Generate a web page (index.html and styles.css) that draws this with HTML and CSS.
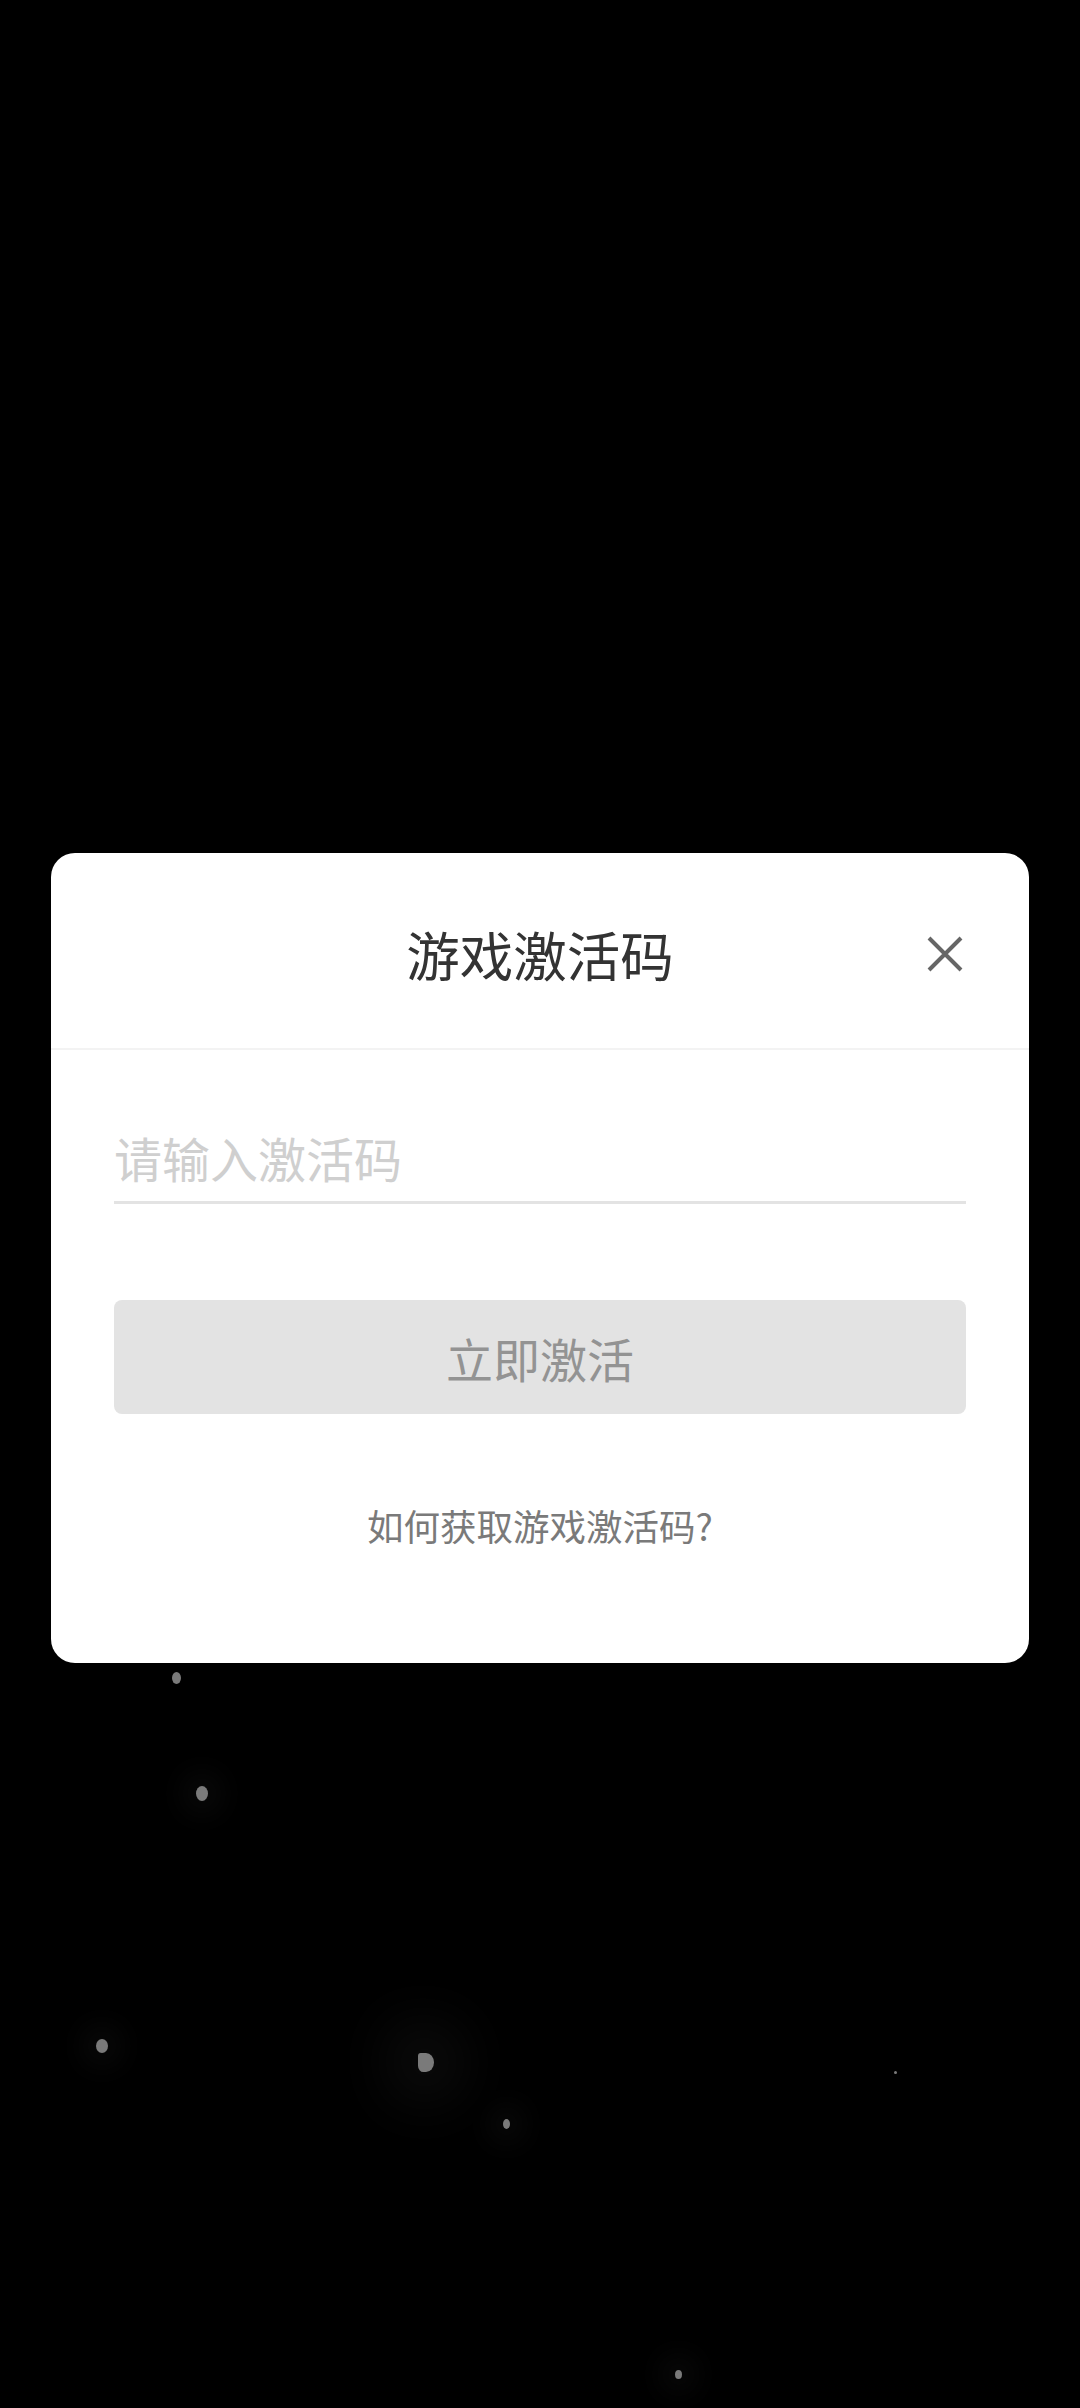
FILE: index.html
```html
<!DOCTYPE html>
<html lang="zh-CN">
<head>
    <meta charset="UTF-8">
    <meta name="viewport" content="width=device-width, initial-scale=1.0">
    <title>游戏激活码</title>
    <link rel="stylesheet" href="styles.css">
</head>
<body>

<div class="stars">
    <span class="star" style="left:172px;top:1672px;width:9px;height:12px;"></span>
    <span class="star glow" style="left:196px;top:1786px;width:12px;height:15px;"></span>
    <span class="star glow" style="left:96px;top:2039px;width:12px;height:14px;"></span>
    <span class="star glow big" style="left:418px;top:2053px;width:16px;height:19px;"></span>
    <span class="star glow" style="left:503px;top:2119px;width:7px;height:10px;"></span>
    <span class="star" style="left:894px;top:2071px;width:3px;height:3px;"></span>
    <span class="star glow" style="left:675px;top:2370px;width:7px;height:9px;"></span>
</div>

<div class="dialog">
    <div class="dialog-header">
        <h1>游戏激活码</h1>
        <button class="close-btn" aria-label="关闭">
            <svg width="36" height="36" viewBox="0 0 36 36">
                <path d="M2 2 L34 34 M34 2 L2 34" stroke="#666" stroke-width="4" stroke-linecap="butt"/>
            </svg>
        </button>
    </div>

    <div class="dialog-body">
        <input type="text" class="code-input" placeholder="请输入激活码">
        <button class="activate-btn">立即激活</button>
        <a class="help-link" href="#">如何获取游戏激活码?</a>
    </div>
</div>

</body>
</html>
```

FILE: styles.css
```css
body {
    margin: 0;
    padding-top: 853px;
    height: 2408px;
    box-sizing: border-box;
    background-color: #000;
    font-family: "Noto Sans CJK SC", "Noto Sans", sans-serif;
    overflow: hidden;
}

/* background particles */
.stars {
    position: absolute;
    top: 0;
    left: 0;
    width: 1080px;
    height: 2408px;
}

.star {
    position: absolute;
    border-radius: 50%;
    background-color: #7a7a7a;
}

.star.glow {
    box-shadow: 0 0 30px 14px rgba(255, 255, 255, 0.04);
}

.star.big {
    border-radius: 20% 60% 60% 40%;
    box-shadow: 0 0 60px 30px rgba(255, 255, 255, 0.05);
}

.dialog {
    position: relative;
    margin: 0 51px;
    background-color: white;
    border-radius: 24px;
    height: 810px;
}

.dialog-header {
    position: relative;
    height: 195px;
    display: flex;
    align-items: center;
    justify-content: center;
    border-bottom: 2px solid #f3f3f3;
}

.dialog-header h1 {
    margin: 0;
    font-size: 53.5px;
    font-weight: normal;
    line-height: 1;
    color: #333;
    padding-top: 6px;
}

.close-btn {
    position: absolute;
    right: 66px;
    top: 83px;
    width: 36px;
    height: 36px;
    padding: 0;
    border: none;
    background: none;
}

.close-btn svg {
    display: block;
}

.dialog-body {
    padding: 79px 63px 0;
    display: flex;
    flex-direction: column;
}

.code-input {
    font-family: inherit;
    font-size: 48px;
    line-height: 56px;
    height: 56px;
    padding: 0 0 16px 0;
    margin: 0;
    border: none;
    border-bottom: 3px solid #e3e3e3;
    outline: none;
    color: #333;
    background: transparent;
    box-sizing: content-box;
}

.code-input::placeholder {
    color: #cfcfcf;
}

.activate-btn {
    margin-top: 96px;
    height: 114px;
    border: none;
    border-radius: 8px;
    background-color: #e3e3e3;
    color: #939393;
    font-family: inherit;
    font-size: 47px;
    line-height: 1;
    padding: 0;
}

.help-link {
    margin-top: 94px;
    text-align: center;
    font-size: 36.5px;
    line-height: 36px;
    color: #7a7a7a;
    text-decoration: none;
}
```
